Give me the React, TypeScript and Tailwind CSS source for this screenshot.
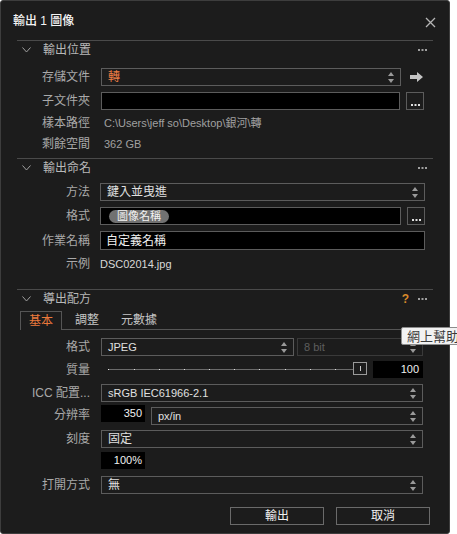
import type { ReactNode } from "react";

const font = "font-['Liberation_Sans','Noto_Sans_CJK_TC',sans-serif]";

function Spinner() {
  return (
    <svg width="6" height="11" viewBox="0 0 6 11" className="shrink-0">
      <path d="M3 0 L6 4 L0 4 Z" fill="#9a9a9a" />
      <path d="M3 11 L6 7 L0 7 Z" fill="#9a9a9a" />
    </svg>
  );
}

function Dots({ color = "#a0a0a0" }: { color?: string }) {
  return (
    <svg width="9" height="2" viewBox="0 0 9 2">
      <rect x="0" y="0" width="2" height="2" fill={color} />
      <rect x="3.5" y="0" width="2" height="2" fill={color} />
      <rect x="7" y="0" width="2" height="2" fill={color} />
    </svg>
  );
}

function Select({
  value,
  className = "",
  valueClass = "text-[12px] text-[#e0e0e0]",
  disabled = false,
}: {
  value: string;
  className?: string;
  valueClass?: string;
  disabled?: boolean;
}) {
  return (
    <div
      className={`flex h-[18px] items-center justify-between border pl-[6px] pr-[6px] ${
        disabled ? "border-[#3a3a3a]" : "border-[#5c5c5c]"
      } ${className}`}
    >
      <span className={`leading-none ${disabled ? "text-[11px] text-[#5e5e5e]" : valueClass}`}>
        {value}
      </span>
      <Spinner />
    </div>
  );
}

function MoreButton() {
  return (
    <div className="flex h-[18px] w-[18px] shrink-0 items-end justify-center border border-[#5c5c5c] pb-[3px]">
      <Dots color="#e0e0e0" />
    </div>
  );
}

function Row({
  label,
  children,
  className = "",
}: {
  label: string;
  children?: ReactNode;
  className?: string;
}) {
  return (
    <div className={`flex items-center ${className}`}>
      <div className="w-[73px] shrink-0 text-right text-[12px] leading-none text-[#a9a9a9]">
        {label}
      </div>
      <div className="ml-[11px] flex min-w-0 flex-1 items-center">{children}</div>
    </div>
  );
}

function Section({
  title,
  extra,
  children,
  className = "",
}: {
  title: string;
  extra?: ReactNode;
  children: ReactNode;
  className?: string;
}) {
  return (
    <div className={`mx-4 border-t border-[#4a4a4a] ${className}`}>
      <div className="flex h-[17px] items-center">
        <svg width="9" height="6" viewBox="0 0 9 6" className="ml-[5px]">
          <polyline points="0.5,0.5 4.5,5 8.5,0.5" fill="none" stroke="#a0a0a0" strokeWidth="1" />
        </svg>
        <span className="ml-[12px] text-[12px] leading-none text-[#b8b8b8]">{title}</span>
        <div className="ml-auto mr-[6px] flex items-center gap-[9px]">
          {extra}
          <Dots />
        </div>
      </div>
      {children}
    </div>
  );
}

function Slider() {
  const ticks = [107, 133, 158, 183, 208, 233, 258, 284, 309, 334];
  return (
    <div className="relative h-[17px] flex-1">
      <div className="absolute left-[7px] right-[7px] top-[8px] h-px bg-[#6a6a6a]" />
      {ticks.map((x) => (
        <div
          key={x}
          className="absolute top-[8px] h-px w-px bg-[#e0e0e0]"
          style={{ left: x - 100 }}
        />
      ))}
      <div className="absolute right-[6px] top-[1px] h-[13px] w-[14px] border border-[#9a9a9a] bg-[#1c1c1c]">
        <div className="absolute left-[6px] top-[3px] h-[5px] w-px bg-[#c8c8c8]" />
      </div>
    </div>
  );
}

const latin = "text-[11px] text-[#e0e0e0]";

export default function App() {
  return (
    <div className={`relative h-[534px] w-[457px] overflow-hidden bg-white ${font}`}>
      <div className="flex h-[534px] w-[450px] flex-col rounded-[3px] border border-[#3d3d3d] bg-[#1c1c1c]">
        {/* title bar */}
        <div className="flex h-[39px] items-center pl-[12px] pr-[13px]">
          <span className="text-[12px] font-medium leading-none text-[#f4f4f4]">輸出 1 圖像</span>
          <svg width="11" height="11" viewBox="0 0 11 11" className="ml-auto mt-[4px]">
            <path d="M1 1 L10 10 M10 1 L1 10" stroke="#b5b5b5" strokeWidth="1.3" />
          </svg>
        </div>

        <Section title="輸出位置" className="pb-[5px]">
          <Row label="存儲文件" className="mt-[10px] h-[18px]">
            <Select value="轉" valueClass="text-[12px] text-[#f07f45]" className="flex-1" />
            <svg width="13" height="10" viewBox="0 0 13 10" className="ml-[9px] mr-[10px] shrink-0">
              <path d="M0 3 H7 V0 L13 5 L7 10 V7 H0 Z" fill="#c4c4c4" />
            </svg>
          </Row>
          <Row label="子文件夾" className="mt-[6px] h-[18px]">
            <div className="h-[18px] flex-1 border border-[#5c5c5c] bg-black" />
            <div className="ml-[6px] mr-[9px]">
              <MoreButton />
            </div>
          </Row>
          <Row label="樣本路徑" className="mt-[4px] h-[18px]">
            <span className="pl-[3px] text-[11px] leading-none text-[#a0a0a0]">
              C:\Users\jeff so\Desktop\銀河\轉
            </span>
          </Row>
          <Row label="剩餘空間" className="mt-[3px] h-[18px]">
            <span className="pl-[3px] text-[11px] leading-none text-[#a0a0a0]">362 GB</span>
          </Row>
        </Section>

        <Section title="輸出命名" className="pb-[16px]">
          <Row label="方法" className="mt-[7px] h-[18px]">
            <div className="-ml-px mr-[8px] flex-1">
              <Select value="鍵入並曳進" />
            </div>
          </Row>
          <Row label="格式" className="mt-[6px] h-[18px]">
            <div className="-ml-px flex h-[18px] flex-1 items-center border border-[#5c5c5c] bg-black pl-[8px]">
              <span className="rounded-full bg-[#717171] px-[8px] text-[11px] leading-[13px] text-[#f4f4f4]">
                圖像名稱
              </span>
            </div>
            <div className="ml-[6px] mr-[8px]">
              <MoreButton />
            </div>
          </Row>
          <Row label="作業名稱" className="mt-[6px] h-[19px]">
            <div className="-ml-px mr-[8px] flex h-[19px] flex-1 items-center border border-[#5c5c5c] bg-black pl-[5px] text-[12px] leading-none text-[#f0f0f0]">
              自定義名稱
            </div>
          </Row>
          <Row label="示例" className="mt-[5px] h-[18px]">
            <span className="-ml-px text-[11px] leading-none text-[#d8d8d8]">DSC02014.jpg</span>
          </Row>
        </Section>

        <Section
          title="導出配方"
          extra={<span className="text-[12px] font-bold leading-none text-[#d98a2b]">?</span>}
        >
          {/* tabs */}
          <div className="mt-[4px] flex h-[19px] items-end">
            <div className="ml-[3px] flex h-[19px] w-[42px] items-center justify-center border-x border-t border-[#555] text-[12px] leading-none text-[#ec7a3c]">
              基本
            </div>
            <div className="flex h-[19px] flex-1 items-center border-b border-[#555] text-[12px] leading-none text-[#c6c6c6]">
              <span className="ml-[13px]">調整</span>
              <span className="ml-[22px]">元數據</span>
            </div>
          </div>

          <div className="pr-[10px]">
            <Row label="格式" className="mt-[8px] h-[18px]">
              <Select value="JPEG" valueClass={latin} className="w-[193px]" />
              <Select value="8 bit" disabled className="ml-[3px] flex-1" />
            </Row>
            <Row label="質量" className="mt-[5px] h-[17px]">
              <Slider />
              <div className="flex h-[17px] w-[50px] items-center justify-end bg-black pr-[4px] text-[11px] leading-none text-[#f0f0f0]">
                100
              </div>
            </Row>
            <Row label="ICC 配置..." className="mt-[6px] h-[18px]">
              <Select value="sRGB IEC61966-2.1" valueClass={latin} className="flex-1" />
            </Row>
            <Row label="分辨率" className="mt-[3px] h-[20px]">
              <div className="flex h-[17px] w-[44px] items-center justify-end self-start bg-black pr-[3px] text-[11px] leading-none text-[#f0f0f0]">
                350
              </div>
              <Select value="px/in" valueClass={latin} className="ml-[6px] mt-[2px] flex-1" />
            </Row>
            <Row label="刻度" className="mt-[5px] h-[18px]">
              <Select value="固定" className="flex-1" />
            </Row>
            <Row label="" className="mt-[4px] h-[17px]">
              <div className="flex h-[17px] w-[44px] items-center justify-end bg-black pr-[3px] text-[11px] leading-none text-[#f0f0f0]">
                100%
              </div>
            </Row>
            <Row label="打開方式" className="mt-[7px] h-[18px]">
              <Select value="無" className="flex-1" />
            </Row>
          </div>

          <div className="mt-[13px] flex justify-end gap-[12px] pr-[3px]">
            <button className="flex h-[18px] w-[94px] items-center justify-center border border-[#6a6a6a] text-[12px] leading-none text-[#f0f0f0]">
              輸出
            </button>
            <button className="flex h-[18px] w-[94px] items-center justify-center border border-[#6a6a6a] text-[12px] leading-none text-[#f0f0f0]">
              取消
            </button>
          </div>
        </Section>
      </div>

      {/* hover hint over the help button */}
      <div className="absolute left-[401px] top-[327px] flex h-[18px] w-[80px] items-center rounded-[2px] border border-[#8c8c8c] bg-[#f2f2f2] pl-[5px] text-[13px] leading-none text-[#3a3a3a]">
        網上幫助
      </div>
    </div>
  );
}
